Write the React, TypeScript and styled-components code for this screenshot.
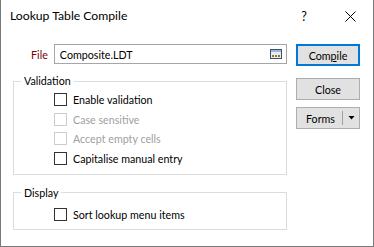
import React from "react";
import styled, { createGlobalStyle } from "styled-components";

const GlobalStyle = createGlobalStyle`
  html, body {
    margin: 0;
    padding: 0;
    background: #ffffff;
  }
  body {
    font-family: "Segoe UI", Lato, "Noto Sans", sans-serif;
    font-size: 10.7px;
    color: #000000;
  }
`;

const Window = styled.div`
  width: 374px;
  height: 247px;
  box-sizing: border-box;
  border: 1px solid #7a7a7a;
  border-top: none;
  background: #ffffff;
  display: flex;
  flex-direction: column;
`;

const TitleBar = styled.div`
  height: 32px;
  display: flex;
  align-items: center;
  padding-left: 9px;
`;

const Title = styled.div`
  flex: 1;
  font-size: 12.2px;
  line-height: 16px;
`;

const TitleButton = styled.div`
  width: 46px;
  height: 32px;
  display: flex;
  align-items: center;
  justify-content: center;
  font-size: 12.5px;
`;

const Body = styled.div`
  display: flex;
  padding: 12px 0 0 12px;
  gap: 9px;
`;

const LeftColumn = styled.div`
  width: 274px;
  display: flex;
  flex-direction: column;
`;

const FileRow = styled.div`
  display: flex;
  align-items: center;
  height: 20px;
`;

const FileLabel = styled.label`
  width: 35px;
  padding-right: 6px;
  text-align: right;
  color: #7b0000;
`;

const FileInput = styled.div`
  width: 234px;
  height: 20px;
  box-sizing: border-box;
  border: 1px solid #a6a6a6;
  display: flex;
  align-items: center;
  padding: 0 4px 0 5px;
`;

const FileText = styled.span`
  flex: 1;
`;

const Group = styled.fieldset<{ $gapTop: number; $padTop: number; $padBottom: number }>`
  margin: ${(p) => p.$gapTop}px 0 0 0;
  padding: ${(p) => p.$padTop}px 0 ${(p) => p.$padBottom}px 40px;
  border: 1px solid #dcdcdc;
  display: flex;
  flex-direction: column;
  min-width: 0;
`;

const Legend = styled.legend`
  margin-left: -33px;
  padding: 0 3px;
  line-height: 16px;
`;

const CheckRow = styled.label<{ $disabled?: boolean }>`
  display: flex;
  align-items: center;
  height: 19.5px;
  gap: 6px;
  color: ${(p) => (p.$disabled ? "#a0a0a0" : "#000000")};
`;

const Box = styled.span<{ $disabled?: boolean }>`
  width: 13px;
  height: 13px;
  box-sizing: border-box;
  border: 1px solid ${(p) => (p.$disabled ? "#cccccc" : "#333333")};
  background: #ffffff;
`;

const RightColumn = styled.div`
  width: 64px;
  display: flex;
  flex-direction: column;
`;

const Button = styled.div<{ $default?: boolean; $gapTop?: number }>`
  height: 22px;
  margin-top: ${(p) => p.$gapTop ?? 0}px;
  box-sizing: border-box;
  border: ${(p) => (p.$default ? "2px solid #0078d7" : "1px solid #adadad")};
  background: #e1e1e1;
  display: flex;
  align-items: center;
  justify-content: center;
`;

const SplitButton = styled(Button)`
  justify-content: flex-start;
`;

const SplitLabel = styled.span`
  flex: 1;
  text-align: center;
  padding-left: 2px;
`;

const SplitArrow = styled.span`
  width: 16px;
  height: 14px;
  border-left: 1px solid #a0a0a0;
  display: flex;
  align-items: center;
  justify-content: center;
`;

const Check = ({ label, disabled }: { label: string; disabled?: boolean }) => (
  <CheckRow $disabled={disabled}>
    <Box $disabled={disabled} />
    {label}
  </CheckRow>
);

const BrowseIcon = () => (
  <svg width="12" height="10" viewBox="0 0 12 10">
    <rect x="0.5" y="0.5" width="11" height="9" fill="#e4edf7" stroke="#3f5068" />
    <rect x="1" y="1" width="10" height="2" fill="#9bb8d8" />
    <rect x="2" y="6" width="2" height="2" fill="#a0701c" />
    <rect x="5" y="6" width="2" height="2" fill="#a0701c" />
    <rect x="8" y="6" width="2" height="2" fill="#a0701c" />
  </svg>
);

export default function App() {
  return (
    <>
      <GlobalStyle />
      <Window>
        <TitleBar>
          <Title>Lookup Table Compile</Title>
          <TitleButton>?</TitleButton>
          <TitleButton>
            <svg width="11" height="11" viewBox="0 0 11 11">
              <path d="M0.5 0.5 L10.5 10.5 M10.5 0.5 L0.5 10.5" stroke="#000" strokeWidth="1" />
            </svg>
          </TitleButton>
        </TitleBar>
        <Body>
          <LeftColumn>
            <FileRow>
              <FileLabel>File</FileLabel>
              <FileInput>
                <FileText>Composite.LDT</FileText>
                <BrowseIcon />
              </FileInput>
            </FileRow>
            <Group $gapTop={9} $padTop={1} $padBottom={6}>
              <Legend>Validation</Legend>
              <Check label="Enable validation" />
              <Check label="Case sensitive" disabled />
              <Check label="Accept empty cells" disabled />
              <Check label="Capitalise manual entry" />
            </Group>
            <Group $gapTop={9.5} $padTop={4} $padBottom={5}>
              <Legend>Display</Legend>
              <Check label="Sort lookup menu items" />
            </Group>
          </LeftColumn>
          <RightColumn>
            <Button $default>
              <span>
                Com<u>p</u>ile
              </span>
            </Button>
            <Button $gapTop={12}>Close</Button>
            <SplitButton $gapTop={7}>
              <SplitLabel>Forms</SplitLabel>
              <SplitArrow>
                <svg width="7" height="4" viewBox="0 0 7 4">
                  <path d="M0.5 0 H6.5 L3.5 3.5 Z" fill="#000" />
                </svg>
              </SplitArrow>
            </SplitButton>
          </RightColumn>
        </Body>
      </Window>
    </>
  );
}
